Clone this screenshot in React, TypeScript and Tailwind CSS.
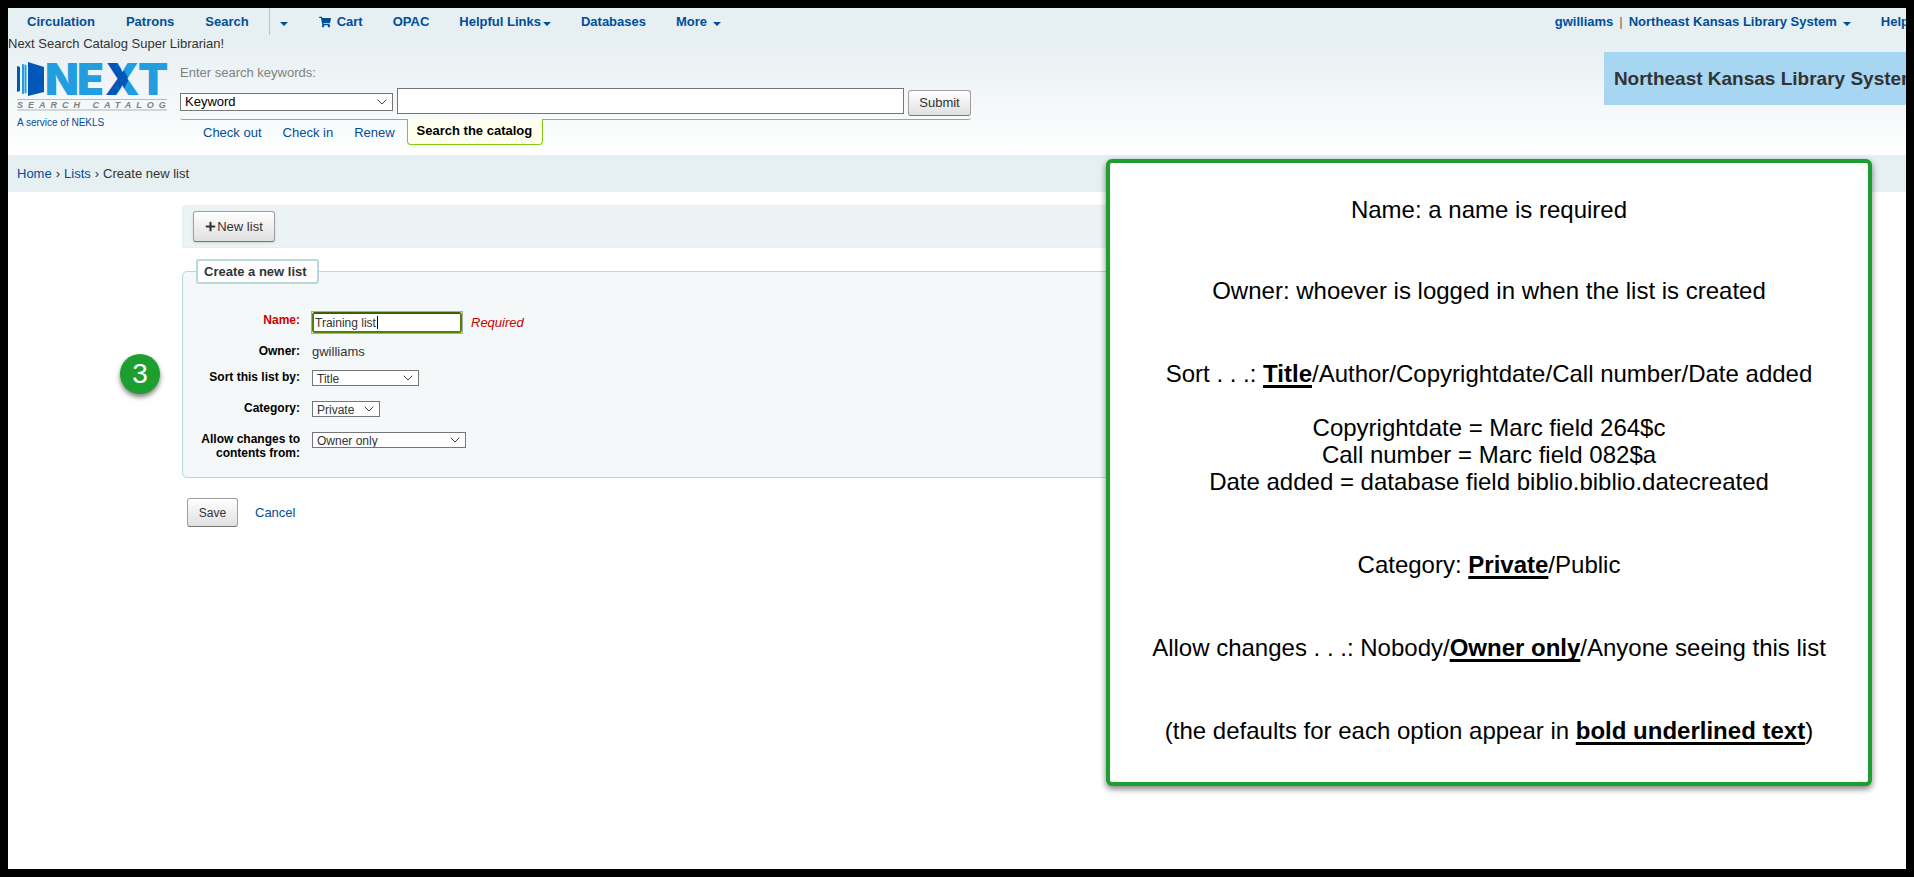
import type { ReactNode } from "react";
import { FaPlus, FaShoppingCart } from "react-icons/fa";

const options = {
  search: ["Keyword", "Title", "Author", "Subject"],
  sort: ["Title", "Author", "Copyrightdate", "Call number", "Date added"],
  category: ["Private", "Public"],
  changes: ["Nobody", "Owner only", "Anyone seeing this list"],
};

function Caret({ className = "" }: { className?: string }) {
  return (
    <svg viewBox="0 0 8 4" className={`inline-block h-1 w-2 align-middle ${className}`} aria-hidden="true">
      <path d="M0 0H8L4 4Z" fill="currentColor" />
    </svg>
  );
}

function NavLink({ children, className = "" }: { children: ReactNode; className?: string }) {
  return (
    <a href="#" className={`flex items-center whitespace-nowrap ${className}`}>
      {children}
    </a>
  );
}

function Select({
  id,
  label,
  items,
  value,
  className,
}: {
  id: string;
  label?: string;
  items: string[];
  value: string;
  className: string;
}) {
  return (
    <span className={`relative inline-flex ${className}`}>
      <select
        id={id}
        aria-label={label}
        defaultValue={value}
        className="w-full appearance-none border border-[#767676] bg-white pl-1"
      >
        {items.map((item) => (
          <option key={item}>{item}</option>
        ))}
      </select>
      <svg
        viewBox="0 0 10 6"
        className="pointer-events-none absolute inset-y-0 right-1.5 my-auto h-1.5 w-2.5"
        fill="none"
        stroke="#444"
        aria-hidden="true"
      >
        <path d="M0.7 0.7L5 5L9.3 0.7" />
      </svg>
    </span>
  );
}

function Logo() {
  return (
    <svg viewBox="0 0 152 50" className="h-[50px] w-[152px] overflow-visible" role="img" aria-label="NEXT Search Catalog">
      <defs>
        <pattern id="x-fill" patternUnits="userSpaceOnUse" x="80" y="0" width="50" height="40">
          <rect width="50" height="40" fill="#219de0" />
          <path d="M0 0H21L32 18L21 40H0Z" fill="#0057b8" />
        </pattern>
      </defs>
      <path d="M0 5L3 6V30L0 31Z" fill="#0057b8" />
      <path d="M5 3L7.5 3.6V32.4L5 33Z" fill="#219de0" />
      <path d="M8 3.7L9.5 4V32L8 32.3Z" fill="#219de0" />
      <path d="M11 1L27 6V31L11 35Z" fill="#0057b8" />
      <g fontFamily="Inter, 'Liberation Sans', sans-serif" fontWeight="900" fontSize="44" fill="#219de0">
        <text x="28" y="34">N</text>
        <text x="60" y="34">E</text>
        <text x="88" y="34" fill="url(#x-fill)">X</text>
        <text x="121" y="34">T</text>
      </g>
      <path d="M0 38.5H150" stroke="#b9bcbe" />
      <text
        x="0"
        y="47"
        fontFamily="'Liberation Sans', sans-serif"
        fontWeight="700"
        fontStyle="italic"
        fontSize="9"
        fill="#7d8083"
        className="tracking-[5px]"
      >
        SEARCH CATALOG
      </text>
      <path d="M0 49H150" stroke="#d3d6d8" strokeWidth="2" />
    </svg>
  );
}

const buttonLook =
  "rounded-[3px] border border-[#a0a0a0] border-b-[#777] bg-linear-to-b from-white to-[#e0e0e0] text-[#333]";

function Row({
  id,
  label,
  children,
  className = "text-black",
}: {
  id?: string;
  label: string;
  children: ReactNode;
  className?: string;
}) {
  return (
    <div className={`flex items-start gap-3 ${className}`}>
      <label htmlFor={id} className="w-26 shrink-0 text-right text-xs leading-[14px] font-bold">
        {label}
      </label>
      {children}
    </div>
  );
}

function Default({ children }: { children: ReactNode }) {
  return (
    <strong className="underline decoration-[3px] underline-offset-[3px] [text-decoration-skip-ink:none]">
      {children}
    </strong>
  );
}

function Notes() {
  return (
    <aside className="absolute top-[151px] right-[34px] w-[766px] rounded-md border-4 border-[#1d9f30] bg-white pt-[33px] pb-[38px] text-center text-2xl leading-[27px] text-black shadow-[0_3px_6px_rgba(0,0,0,0.5)]">
      <div className="flex flex-col gap-14">
        <p className="-mb-0.5">Name: a name is required</p>
        <p>Owner: whoever is logged in when the list is created</p>
        <div>
          <p>
            Sort . . .: <Default>Title</Default>/Author/Copyrightdate/Call number/Date added
          </p>
          <p className="pt-[27px]">
            Copyrightdate = Marc field 264$c
            <br />
            Call number = Marc field 082$a
            <br />
            Date added = database field biblio.biblio.datecreated
          </p>
        </div>
        <p>
          Category: <Default>Private</Default>/Public
        </p>
        <p>
          Allow changes . . .: Nobody/<Default>Owner only</Default>/Anyone seeing this list
        </p>
        <p>
          (the defaults for each option appear in <Default>bold underlined text</Default>)
        </p>
      </div>
    </aside>
  );
}

export default function App() {
  return (
    <div className="relative min-h-screen overflow-hidden border-8 border-black bg-white font-['Liberation_Sans',Arial,sans-serif] text-[13px] leading-4 text-[#333]">
      <header className="bg-linear-to-b from-[#e6eff2] from-20% to-white pb-2.5">
        <nav className="-mr-[18px] flex h-[27px] justify-between pl-1 font-bold text-[#004d99]">
          <div className="flex">
            <NavLink className="pr-4 pl-[15px]">Circulation</NavLink>
            <NavLink className="pr-4 pl-[15px]">Patrons</NavLink>
            <NavLink className="border-r border-[#b0c8ce] pr-5 pl-[15px]">Search</NavLink>
            <a href="#" aria-label="Search options" className="flex items-center pt-1 pr-4 pl-2.5">
              <Caret />
            </a>
            <NavLink className="gap-1.5 px-[15px]">
              <FaShoppingCart className="size-3" />
              Cart
            </NavLink>
            <NavLink className="px-[15px]">OPAC</NavLink>
            <NavLink className="gap-0.5 px-[15px]">
              Helpful Links
              <Caret className="mt-1" />
            </NavLink>
            <NavLink className="px-[15px]">Databases</NavLink>
            <NavLink className="gap-1.5 px-[15px]">
              More
              <Caret className="mt-1" />
            </NavLink>
          </div>
          <div className="flex">
            <NavLink className="gap-1.5 px-[15px]">
              gwilliams
              <span className="font-normal text-[#666]">|</span>
              Northeast Kansas Library System
              <Caret className="mt-1" />
            </NavLink>
            <NavLink className="px-[15px]">Help</NavLink>
          </div>
        </nav>

        <p className="pt-px">Next Search Catalog Super Librarian!</p>

        <div className="-mr-[22px] flex items-start">
          <div className="w-[172px] shrink-0 pt-[9px] pl-[9px]">
            <Logo />
            <a href="#" className="mt-1 block text-[10px] text-[#004d99]">
              A service of NEKLS
            </a>
          </div>

          <div className="w-[791px] pt-[13px]">
            <label htmlFor="keywords" className="block text-[#808080]">
              Enter search keywords:
            </label>
            <form className="flex items-center gap-1 pt-[5px]" onSubmit={(event) => event.preventDefault()}>
              <Select
                id="search-type"
                label="Search type"
                items={options.search}
                value="Keyword"
                className="mt-0.5 h-[18px] w-[213px] text-black"
              />
              <input id="keywords" type="text" className="h-[26px] min-w-0 grow border border-[#767676] bg-white px-1" />
              <button type="submit" className={`mt-1 h-[26px] w-[63px] ${buttonLook}`}>
                Submit
              </button>
            </form>
            <div className="h-1 rounded-b-[3px] border-b border-[#85ca11]" />
            <div className="-mt-px flex items-start gap-[21px] pl-[23px] text-[#004d99]">
              <a href="#" className="pt-1.5">Check out</a>
              <a href="#" className="pt-1.5">Check in</a>
              <a href="#" className="pt-1.5">Renew</a>
              <a
                href="#"
                className="-ml-[9px] rounded-b-[4px] border border-t-0 border-[#85ca11] bg-[#ffffee] pt-1 pr-2.5 pb-[5px] pl-[9px] font-bold text-black"
              >
                Search the catalog
              </a>
            </div>
          </div>

          <div className="ml-auto bg-[#a6d6f2] px-2.5 py-3.5 text-[19px] leading-[25px] font-bold whitespace-nowrap text-[#333]">
            Northeast Kansas Library System
          </div>
        </div>
      </header>

      <div className="flex h-[37px] items-center gap-1 bg-[#e6eff2] px-[9px]">
        <a href="#" className="text-[#004d99]">Home</a>
        <span>›</span>
        <a href="#" className="text-[#004d99]">Lists</a>
        <span>›</span>
        <span>Create new list</span>
      </div>

      <main className="mr-12 ml-[174px] pt-[13px]">
        <div className="rounded-t-[4px] border border-[#e6eff2] bg-[#ebf3f5] px-2.5 py-[5px]">
          <button type="button" className={`flex h-[31px] w-[82px] items-center justify-center gap-px shadow-sm ${buttonLook}`}>
            <FaPlus className="size-[11px]" />
            New list
          </button>
        </div>

        <form onSubmit={(event) => event.preventDefault()}>
          <fieldset className="mt-[11px] rounded-[5px] border border-[#b9d8d9] bg-[#f4f8f9] px-[13px] pb-[17px]">
            <legend className="rounded-[3px] border-2 border-[#b9d8d9] bg-white py-0.5 pr-2.5 pl-1.5 text-[13px] leading-[17px] font-bold">
              Create a new list
            </legend>
            <div className="flex flex-col gap-[15px] pt-[29px]">
              <Row id="name" label="Name:" className="text-[#c00]">
                <span className="-mt-0.5 -mb-[5px] -ml-px flex items-center gap-2">
                  <span className="relative flex border border-[#aaa]">
                    <input
                      id="name"
                      type="text"
                      autoFocus
                      defaultValue="Training list"
                      className="h-[21px] w-[150px] rounded-[3px] border-2 border-[#538200] border-t-[#3e6100] bg-white px-px text-xs text-[#333] caret-transparent outline-none"
                    />
                    <span className="absolute inset-y-1 left-[65px] w-px bg-black" />
                  </span>
                  <span className="italic">Required</span>
                </span>
              </Row>
              <Row label="Owner:" className="h-[11px] text-black">
                <span className="text-[#333]">gwilliams</span>
              </Row>
              <Row id="sort" label="Sort this list by:">
                <Select id="sort" items={options.sort} value="Title" className="h-4 w-[107px] text-xs text-[#333]" />
              </Row>
              <Row id="category" label="Category:">
                <Select id="category" items={options.category} value="Private" className="h-4 w-17 text-xs text-[#333]" />
              </Row>
              <Row id="changes" label="Allow changes to contents from:">
                <Select id="changes" items={options.changes} value="Owner only" className="h-4 w-[154px] text-xs text-[#333]" />
              </Row>
            </div>
          </fieldset>

          <div className="flex items-center gap-[17px] px-[5px] pt-5">
            <button type="submit" className={`h-[29px] w-[51px] text-xs ${buttonLook}`}>
              Save
            </button>
            <a href="#" className="text-[#004d99]">Cancel</a>
          </div>
        </form>
      </main>

      <span className="absolute top-[346px] left-28 flex size-10 items-center justify-center rounded-full bg-[#1d9f30] text-[28px] text-white shadow-[0_3px_5px_rgba(0,0,0,0.5)]">
        3
      </span>
      <Notes />
    </div>
  );
}
